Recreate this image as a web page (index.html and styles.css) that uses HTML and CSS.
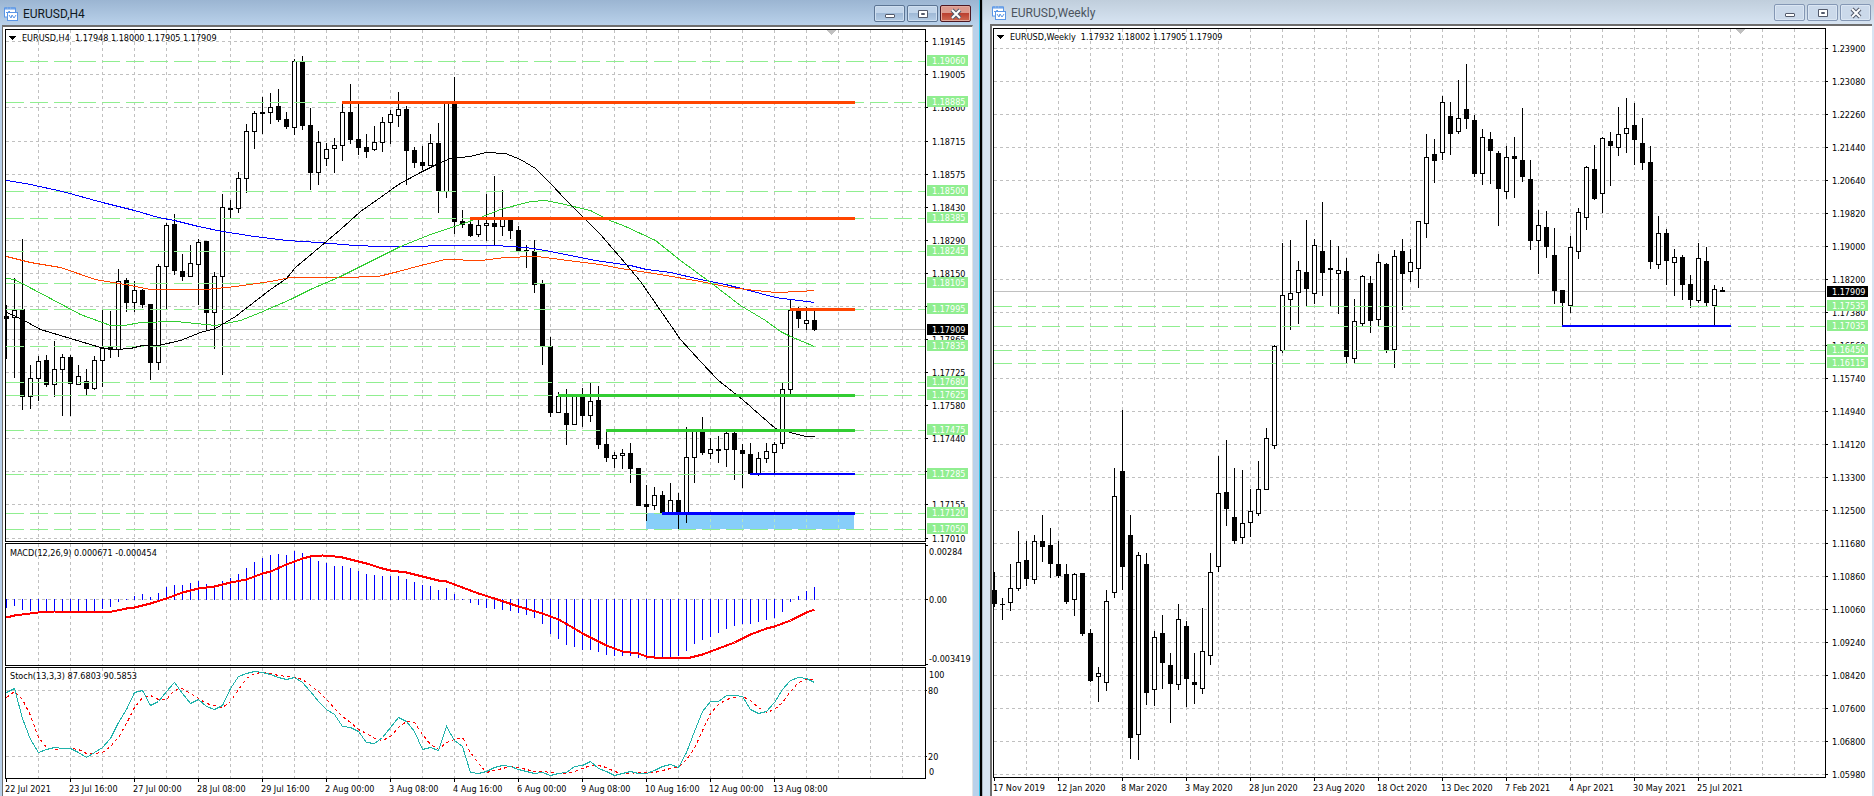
FILE: index.html
```html
<!DOCTYPE html>
<html lang="en">
<head>
    <meta charset="UTF-8">
    <meta name="viewport" content="width=device-width, initial-scale=1.0">
    <title>EURUSD charts</title>
    <link rel="stylesheet" href="styles.css">
</head>
<body>

    <section class="window window-active">
        <header class="titlebar">
            <svg class="app-icon" viewBox="0 0 14 14" aria-hidden="true">
                <rect x="0.5" y="1" width="11" height="9" fill="#fff" stroke="#5a96e6"/>
                <path d="M0 2h12M2 0v2M5 0v2M8 0v2M10 0v2" stroke="#5a96e6"/>
                <path d="M2 6l1-1 1 1 1-2 2 2" fill="none" stroke="#5a96e6"/>
                <rect x="3.5" y="5.5" width="10" height="8" fill="#fff" stroke="#5a96e6"/>
                <path d="M3 5.5h11" stroke="#5a96e6"/>
                <path d="M5 8l2 3 1-3 2 3 2-3" fill="none" stroke="#5a96e6"/>
            </svg>
            <h1 class="title">EURUSD,H4</h1>
            <button class="win-btn" aria-label="Minimize"><svg viewBox="0 0 12 12"><rect x="1.5" y="6.5" width="9" height="3" rx="0.5" fill="#fff" stroke="#535a6b"/></svg></button>
            <button class="win-btn" aria-label="Maximize"><svg viewBox="0 0 12 12"><path d="M1.500 2.500h9v7h-9zM4.500 5.500h3v1h-3z" fill="#fff" stroke="#535a6b"/></svg></button>
            <button class="win-btn win-close" aria-label="Close"><svg viewBox="0 0 12 12"><path d="M2 2l8 8M10 2l-8 8" stroke="#535a6b" stroke-width="4"/><path d="M2 2l8 8M10 2l-8 8" stroke="#fff" stroke-width="2"/></svg></button>
        </header>
        <div class="client">
            <svg class="pane pane-price" id="h4Price"></svg>
            <svg class="pane pane-macd" id="h4Macd"></svg>
            <svg class="pane pane-stoch" id="h4Stoch"></svg>
            <svg class="dates" id="h4Dates"></svg>
        </div>
    </section>

    <section class="window window-weekly">
        <header class="titlebar">
            <svg class="app-icon" viewBox="0 0 14 14" aria-hidden="true">
                <rect x="0.5" y="1" width="11" height="9" fill="#fff" stroke="#5a96e6"/>
                <path d="M0 2h12M2 0v2M5 0v2M8 0v2M10 0v2" stroke="#5a96e6"/>
                <path d="M2 6l1-1 1 1 1-2 2 2" fill="none" stroke="#5a96e6"/>
                <rect x="3.5" y="5.5" width="10" height="8" fill="#fff" stroke="#5a96e6"/>
                <path d="M3 5.5h11" stroke="#5a96e6"/>
                <path d="M5 8l2 3 1-3 2 3 2-3" fill="none" stroke="#5a96e6"/>
            </svg>
            <h1 class="title">EURUSD,Weekly</h1>
            <button class="win-btn" aria-label="Minimize"><svg viewBox="0 0 12 12"><rect x="1.5" y="6.5" width="9" height="3" rx="0.5" fill="#fff" stroke="#535a6b"/></svg></button>
            <button class="win-btn" aria-label="Maximize"><svg viewBox="0 0 12 12"><path d="M1.500 2.500h9v7h-9zM4.500 5.500h3v1h-3z" fill="#fff" stroke="#535a6b"/></svg></button>
            <button class="win-btn" aria-label="Close"><svg viewBox="0 0 12 12"><path d="M2 2l8 8M10 2l-8 8" stroke="#535a6b" stroke-width="4"/><path d="M2 2l8 8M10 2l-8 8" stroke="#fff" stroke-width="2"/></svg></button>
        </header>
        <div class="client">
            <svg class="pane pane-price" id="wPrice"></svg>
            <svg class="dates" id="wDates"></svg>
        </div>
    </section>

    <script src="charts.js"></script>
</body>
</html>
```
FILE: styles.css
```css
* {
    box-sizing: border-box;
}

body {
    margin: 0;
    height: 100vh;
    display: grid;
    grid-template-columns: minmax(0, 980fr) minmax(0, 892fr);
    gap: 2px;
    background-color: #000;
    overflow: hidden;
}

.window {
    display: flex;
    flex-direction: column;
    min-width: 0;
}

.window-active {
    padding: 0 6px 0 2px;
    border-right: 1px solid #35c4e8;
    background: linear-gradient(#9bb5d2, #b9d1ea 25px);
}

.window-weekly {
    padding: 0 2px 0 7px;
    border-left: 1px solid #a9b4bf;
    background: linear-gradient(#c0cedc, #d7e4f2 24px);
}

/* title bar */
.titlebar {
    display: flex;
    align-items: center;
    gap: 2px;
    height: 25px;
    flex: none;
    padding: 2px 2px 0 2px;
}

.window-weekly .titlebar {
    height: 24px;
    padding: 1px 1px 0 2px;
}

.app-icon {
    width: 14px;
    height: 14px;
    flex: none;
}

.title {
    flex: 1;
    margin: 0 0 0 3px;
    font: 12px Roboto, sans-serif;
    line-height: 16px;
    color: #101820;
    white-space: nowrap;
}

.window-weekly .title {
    color: #4c5560;
}

.win-btn {
    width: 31px;
    height: 17px;
    padding: 0;
    display: flex;
    align-items: center;
    justify-content: center;
    border: 1px solid #5c7594;
    border-radius: 2px;
    background: linear-gradient(#c2d5ea 45%, #9fb9d6 50%, #b5cde6);
    box-shadow: inset 0 0 0 1px #cfdff0;
}

.window-weekly .win-btn {
    border-color: #8497b4;
    background: #cbd9ea;
    box-shadow: inset 0 0 0 1px #dbe6f3;
}

.win-btn svg {
    width: 12px;
    height: 12px;
}

.win-close {
    border-color: #4e1822;
    background: linear-gradient(#dc9a8e 45%, #bb4030 50%, #cf6a52);
    box-shadow: inset 0 0 0 1px #e3a99d;
}

/* chart area */
.client {
    flex: 1;
    min-height: 0;
    display: flex;
    flex-direction: column;
    gap: 1px;
    padding: 2px 0 0 2px;
    background-color: #fff;
    border-top: 2px solid #6e6e6e;
    border-left: 1px solid #6e6e6e;
    border-right: 1px solid #e3e3e3;
}

.window-weekly .client {
    padding-left: 1px;
    gap: 0;
    border-left-width: 2px;
    border-right: none;
}

.pane {
    width: 100%;
    min-height: 0;
    display: block;
}

.pane-price {
    flex: 513 1 0;
}

.pane-macd {
    flex: 123 1 0;
}

.pane-stoch {
    flex: 112 1 0;
}

.dates {
    width: 100%;
    height: 17px;
    flex: none;
    margin-top: -1px;
}

.window-weekly .dates {
    height: 18px;
    margin-top: 0;
}

.pane, .dates {
    overflow: visible;
    shape-rendering: crispEdges;
    font: 9px "DejaVu Sans Condensed", "DejaVu Sans", sans-serif;
}

.frame {
    fill: none;
    stroke: #000;
}

.grid {
    fill: none;
    stroke: #c0c0c0;
    stroke-dasharray: 3 3;
}

.grid-zone {
    fill: none;
    stroke: #b0e6c8;
    stroke-dasharray: 3 3;
}

.level {
    fill: none;
    stroke: #90ee90;
    stroke-dasharray: 18 6;
}

.bid {
    stroke: #c0c0c0;
}

.tick {
    stroke: #000;
}

.candle-down {
    fill: #000;
}

.candle-up {
    fill: #fff;
    stroke: #000;
}

.zone {
    fill: #87cefa;
}

.marker {
    fill: #c0c0c0;
}

.tag-level {
    fill: #90ee90;
}

.tag-bid {
    fill: #000;
}

.tag-text {
    fill: #fff;
}

.line {
    fill: none;
}

.black { stroke: #000; }
.blue { stroke: #0000ff; }
.orange { stroke: #ff4500; }
.green { stroke: #32cd32; }
.red { stroke: #ff0000; }
.teal { stroke: #20b2aa; }

.wide {
    stroke-width: 2;
}

.wider {
    stroke-width: 3;
}

.dotted {
    stroke-dasharray: 3 3;
}
```
FILE: charts.js
```js
var AXIS = 46;   // width of the price scale
var STEP = 8;    // distance between bars

// candles: high, body top, body bottom, low, 1 = up / 0 = down
var h4Bars = [
    [305,316,319,359,0],[278,310,318,378,1],[239,309,397,410,0],[365,378,397,409,1],[356,361,379,401,1],
    [355,360,385,387,0],[341,369,385,397,1],[354,357,370,416,1],[355,357,384,416,0],[365,376,385,385,1],
    [369,381,389,395,0],[356,360,389,390,1],[310,348,361,387,1],[311,347,350,358,0],[269,281,350,357,1],
    [278,280,303,312,0],[281,290,303,312,1],[289,290,305,308,0],[304,304,363,380,0],[264,266,363,370,1],
    [223,225,267,309,1],[214,224,271,275,0],[254,271,277,281,0],[245,263,277,277,1],[239,242,265,305,1],
    [241,241,313,330,0],[272,276,313,349,1],[194,207,277,375,1],[200,208,210,218,0],[172,178,209,213,1],
    [124,131,179,193,1],[111,113,132,149,1],[97,112,114,134,0],[93,107,113,124,1],[89,106,120,122,0],
    [112,119,127,129,0],[59,61,128,135,1],[56,61,126,130,0],[108,125,173,190,0],[131,142,173,185,1],
    [143,149,159,166,1],[138,145,149,173,1],[103,112,146,161,1],[84,112,140,144,0],[104,139,148,155,0],
    [134,147,152,158,0],[126,142,150,151,1],[117,122,143,152,1],[110,114,123,144,1],[92,109,116,127,1],
    [106,109,151,185,0],[147,150,163,168,0],[146,162,166,170,0],[134,143,166,166,1],[123,143,191,213,0],
    [102,102,192,198,1],[77,103,222,234,0],[210,221,225,228,0],[219,224,236,237,0],[219,225,235,237,1],
    [194,223,226,241,1],[176,223,227,245,0],[190,219,227,236,1],[219,220,231,239,0],[226,230,251,251,0],
    [245,250,251,268,0],[240,251,285,293,0],[280,284,346,365,0],[337,346,413,417,0],[392,396,413,413,1],
    [389,413,425,445,0],[396,396,425,425,1],[388,396,416,427,0],[383,401,416,422,1],[386,400,445,449,0],
    [430,444,458,462,0],[452,455,459,468,1],[449,453,456,469,1],[443,453,469,483,0],[468,468,506,506,0],
    [485,504,507,521,0],[487,495,506,510,1],[491,495,514,514,0],[483,500,514,514,1],[493,500,514,529,0],
    [427,457,514,523,1],[430,430,458,483,1],[417,430,453,455,0],[438,449,454,459,1],[436,449,451,463,0],
    [432,433,450,467,1],[432,433,450,480,0],[444,450,454,488,0],[443,454,474,474,0],[452,458,474,476,1],
    [443,451,459,463,1],[442,444,453,474,1],[383,389,444,449,1],[300,310,390,395,1],[307,311,319,328,0],
    [307,320,324,330,1],[309,320,330,331,0]
];

var weeklyBars = [
    [572,590,604,607,0],[598,604,605,620,0],[564,588,603,611,1],[531,562,589,591,1],[541,560,579,586,0],
    [535,541,580,584,1],[515,541,547,562,0],[528,545,564,578,0],[541,564,576,578,0],[564,574,602,604,0],
    [573,574,600,616,1],[573,573,634,636,0],[629,633,681,682,0],[667,673,677,702,1],[590,601,683,691,1],
    [468,496,593,598,1],[410,471,567,590,0],[515,535,738,759,0],[552,555,735,760,1],[553,564,693,705,0],
    [631,637,690,706,1],[615,633,663,689,0],[653,665,684,723,0],[604,619,685,690,1],[621,626,679,707,0],
    [653,682,685,704,0],[608,651,689,694,1],[553,572,656,665,1],[456,493,567,572,1],[440,492,509,526,0],
    [468,517,541,544,0],[470,523,538,544,1],[489,511,523,537,1],[461,489,514,516,1],[428,438,490,490,1],
    [345,346,446,449,1],[243,295,351,353,1],[240,293,300,330,1],[261,270,293,324,1],[220,272,289,306,0],
    [239,245,294,304,1],[202,251,273,296,0],[240,268,270,306,0],[246,270,274,314,1],[258,271,357,363,0],
    [299,321,359,363,1],[275,276,324,326,1],[276,283,321,333,0],[254,262,320,326,1],[263,264,350,353,0],
    [250,256,350,368,1],[239,251,274,310,0],[249,262,272,282,1],[221,221,269,288,1],[134,157,224,238,1],
    [139,154,161,183,0],[96,102,153,160,1],[102,116,134,155,0],[80,118,132,134,1],[64,109,119,129,0],
    [115,120,174,177,0],[129,137,174,185,1],[132,139,151,184,0],[151,153,189,226,0],[146,157,192,199,1],
    [137,156,159,198,0],[108,160,177,182,0],[160,179,241,250,0],[210,225,241,274,1],[211,227,247,258,0],
    [228,255,291,304,0],[290,290,303,326,0],[236,247,306,313,1],[208,212,252,259,1],[166,167,218,230,1],
    [145,169,199,200,0],[137,138,194,213,1],[132,141,146,186,0],[107,134,148,156,1],[98,128,134,153,1],
    [103,125,140,165,0],[118,143,163,170,0],[146,162,262,269,0],[216,233,265,269,1],[229,233,261,285,0],
    [249,257,263,296,1],[255,257,285,300,0],[275,284,300,308,0],[243,258,301,303,1],[247,261,303,306,0],
    [285,289,306,325,1],[287,290,292,292,0]
];

// moving averages, x then y
var maSlow = [6,180,30,184,62,191,102,202,134,210,158,217,174,220,198,226,222,231,254,236,286,240,318,242,355,245,380,246,415,246,440,245,495,245,525,247,545,250,575,256,595,260,630,265,646,269,670,272,700,279,725,284,745,289,760,293,775,297,790,299,814,302];
var maOrange = [6,256,30,262,60,267,95,279,130,285,150,289,206,289,235,286,270,281,290,277,310,277,340,277,378,276,398,271,420,265,445,259,480,260,505,257,535,256,545,257,575,261,600,264,620,268,660,274,700,281,730,287,755,290,775,292,800,291,814,290];
var maGreen = [6,278,14,279,50,298,80,314,110,325,124,325,140,322,175,321,215,325,240,320,260,312,290,299,310,289,340,276,370,261,400,246,430,234,460,224,480,217,500,209,530,201,545,200,560,203,590,210,607,219,625,226,655,240,680,260,710,282,740,305,765,320,780,331,790,336,814,346];
var maFast = [6,312,20,318,40,329,70,338,100,347,115,349,130,348,142,345,158,345,180,340,200,332,215,328,235,316,270,289,286,278,295,267,320,246,340,229,360,211,380,197,398,184,420,172,440,162,450,158,470,156,485,152,505,153,520,159,535,168,550,183,565,199,580,214,600,234,625,263,640,281,660,310,680,339,700,361,718,380,742,399,760,415,775,428,790,432,805,436,814,436];

var macdBars = [608,606,610,611,611,611,611,611,611,611,611,611,609,607,602,600,596,594,597,593,587,585,585,583,581,584,586,581,578,574,568,562,558,555,554,555,551,553,556,561,563,566,566,568,571,574,575,576,576,576,579,582,585,586,590,588,594,600,603,605,608,609,610,611,613,615,618,624,634,639,645,647,650,650,652,655,656,656,656,658,659,657,657,657,656,651,644,640,637,633,629,626,624,624,622,620,618,612,602,596,591,587];
var macdSignal = [6,617,14,615,38,612,54,611,80,611,102,612,112,611,126,608,134,607,150,603,166,598,182,592,198,588,214,586,230,582,246,579,262,573,270,571,286,564,302,558,310,556,322,555,334,556,342,557,366,563,382,568,390,570,406,572,422,576,438,580,446,581,462,587,478,593,494,598,518,606,542,613,558,619,574,628,582,633,598,641,606,645,622,651,638,653,646,656,654,657,690,657,702,654,718,648,734,642,750,634,766,628,774,626,790,620,806,612,814,609];

var stochMain = [692,688,718,739,752,749,747,748,748,752,757,752,747,738,722,709,692,690,705,701,691,682,693,703,699,706,709,705,688,676,673,671,672,674,677,679,677,682,691,701,709,714,726,727,731,742,743,737,727,717,721,731,749,747,750,726,740,746,772,773,771,767,765,766,769,771,773,772,775,773,772,766,765,761,768,771,775,773,771,773,773,770,766,764,767,752,731,711,701,701,695,695,696,709,713,711,702,689,680,677,678,682];
var stochSignal = [697,691,699,715,737,747,749,748,748,749,753,753,752,746,737,723,707,697,695,699,699,690,688,693,698,703,705,707,701,689,678,673,672,673,675,676,677,679,685,691,699,708,716,722,729,733,738,740,736,727,721,722,734,744,749,742,739,737,752,763,772,770,768,766,767,769,771,771,772,773,773,771,768,765,765,767,771,773,773,772,772,772,770,768,767,759,748,730,713,704,699,697,696,700,707,712,709,702,691,682,679,679];

var h4Dates = ["22 Jul 2021", "23 Jul 16:00", "27 Jul 00:00", "28 Jul 08:00", "29 Jul 16:00", "2 Aug 00:00", "3 Aug 08:00", "4 Aug 16:00", "6 Aug 00:00", "9 Aug 08:00", "10 Aug 16:00", "12 Aug 00:00", "13 Aug 08:00"];
var weeklyDates = ["17 Nov 2019", "12 Jan 2020", "8 Mar 2020", "3 May 2020", "28 Jun 2020", "23 Aug 2020", "18 Oct 2020", "13 Dec 2020", "7 Feb 2021", "4 Apr 2021", "30 May 2021", "25 Jul 2021"];

// pane with its own vertical range [from, from + span]
function Pane(id, from, span, left) {
    this.el = document.getElementById(id);
    this.w = this.el.clientWidth;
    this.h = this.el.clientHeight;
    this.plot = this.w - AXIS;
    this.from = from;
    this.k = this.h / span;
    this.left = left;
    this.out = [];
}

Pane.prototype.y = function (v) {
    return Math.round((v - this.from) * this.k);
};

Pane.prototype.x = function (i) {
    return 1 + i * STEP;
};

Pane.prototype.rect = function (x, y, w, h, cls) {
    this.out.push('<rect x="' + x + '" y="' + y + '" width="' + w + '" height="' + h + '" class="' + cls + '"/>');
};

Pane.prototype.path = function (d, cls) {
    this.out.push('<path d="' + d + '" class="' + cls + '"/>');
};

Pane.prototype.text = function (x, y, s, cls) {
    this.out.push('<text x="' + x + '" y="' + y + '" xml:space="preserve" class="' + (cls || '') + '">' + s + '</text>');
};

Pane.prototype.hline = function (v, cls) {
    this.path('M1 ' + (this.y(v) + 0.5) + 'H' + (this.plot - 1), cls);
};

Pane.prototype.vgrid = function (fromX, toX, top, bottom, cls) {
    for (var i = 4; this.x(i) < toX; i += 4) {
        if (this.x(i) > fromX) {
            this.path('M' + (this.x(i) + 0.5) + ' ' + top + 'V' + bottom, cls);
        }
    }
};

Pane.prototype.scaleLabel = function (v, s) {
    var y = this.y(v);
    this.path('M' + this.plot + ' ' + (y + 0.5) + 'h2', 'tick');
    this.text(this.plot + 6, y + 4, s);
};

Pane.prototype.tag = function (v, s, cls, shift) {
    var y = this.y(v) + shift;
    this.rect(this.plot + 1, y - 5, 41, 11, cls);
    this.text(this.plot + 6, y + 4, s, 'tag-text');
};

Pane.prototype.candles = function (bars) {
    for (var i = 0; i < bars.length; i++) {
        var b = bars[i], x = this.x(i);
        var top = this.y(b[1]), height = Math.max(this.y(b[2]) - top, 1);
        this.rect(x, this.y(b[0]), 1, this.y(b[3]) - this.y(b[0]), 'candle-down');
        if (b[4]) {
            this.out.push('<rect x="' + (x - 1.5) + '" y="' + (top + 0.5) + '" width="4" height="' + (height - 1) + '" class="candle-up"/>');
        } else {
            this.rect(x - 2, top, 5, height, 'candle-down');
        }
    }
};

// flat list of x,y pairs
Pane.prototype.curve = function (pts, cls) {
    var d = '';
    for (var i = 0; i < pts.length; i += 2) {
        d += (i ? 'L' : 'M') + (pts[i] - this.left + 0.5) + ' ' + (this.y(pts[i + 1]) + 0.5);
    }
    this.path(d, 'line ' + cls);
};

// one value per bar
Pane.prototype.series = function (vals, cls) {
    var d = '';
    for (var i = 0; i < vals.length; i++) {
        d += (i ? 'L' : 'M') + (this.x(i) + 0.5) + ' ' + (this.y(vals[i]) + 0.5);
    }
    this.path(d, 'line ' + cls);
};

Pane.prototype.ray = function (v, fromBar, toBar, cls) {
    var off = cls.indexOf('wider') >= 0 ? 0.5 : 0;
    this.path('M' + this.x(fromBar) + ' ' + (this.y(v) + off) + 'H' + (this.x(toBar) + 1), 'line ' + cls);
};

Pane.prototype.caption = function (s) {
    this.path('M4 7h7l-3 4h-1z', 'candle-down');
    this.text(17, 12, s);
};

Pane.prototype.marker = function (x) {
    this.path('M' + (x - 4) + ' 1h9l-4 5h-1z', 'marker');
};

Pane.prototype.done = function () {
    this.path('M0.5 0.5H' + (this.plot - 0.5) + 'V' + (this.h - 0.5) + 'H0.5z', 'frame');
    this.el.innerHTML = this.out.join('');
};

function drawPrice(p, c) {
    var i, y;
    p.vgrid(0, p.plot, 1, p.h, 'grid');
    for (i = 0; i < c.scale.length; i++) {
        y = c.scaleY ? c.scaleY[i] : c.first + i * 33;
        p.hline(y, 'grid');
        p.scaleLabel(y, c.scale[i]);
    }
    p.hline(c.bid, 'bid');
    if (c.zone) {
        var zx = p.x(c.zone[0]), zr = p.x(c.zone[1]);
        p.rect(zx, p.y(c.zone[2]), zr - zx, p.y(c.zone[3]) - p.y(c.zone[2]), 'zone');
        p.vgrid(zx, zr, p.y(c.zone[2]), p.y(c.zone[3]), 'grid-zone');
    }
    p.candles(c.bars);
    for (i = 0; i < c.levels.length; i++) {
        p.hline(c.levels[i][0], 'level');
    }
    for (i = 0; i < c.curves.length; i++) {
        p.curve(c.curves[i][0], c.curves[i][1]);
    }
    for (i = 0; i < c.rays.length; i++) {
        p.ray(c.rays[i][0], c.rays[i][1], c.rays[i][2], c.rays[i][3]);
    }
    for (i = 0; i < c.levels.length; i++) {
        p.tag(c.levels[i][0], c.levels[i][1], 'tag-level', -1);
    }
    p.tag(c.bid, '1.17909', 'tag-bid', 0);
    p.caption(c.caption);
    p.marker(c.marker);
    p.done();
}

function drawDates(id, labels) {
    var p = new Pane(id, 0, 17, 0);
    for (var i = 0; i < labels.length; i++) {
        p.path('M' + (p.x(i * 8) + 0.5) + ' 0v3', 'tick');
        p.text(p.x(i * 8) - 1, 13, labels[i]);
    }
    p.el.innerHTML = p.out.join('');
}

function drawAll() {
    drawPrice(new Pane('h4Price', 29, 513, 5), {
        caption: 'EURUSD,H4  1.17948 1.18000 1.17905 1.17909',
        scale: ['1.19145', '1.19005', '1.18860', '1.18715', '1.18575', '1.18430', '1.18290', '1.18150', '1.18010', '1.17865', '1.17725', '1.17580', '1.17440', '1.17300', '1.17155', '1.17010'],
        scaleY: [41, 74, 107, 141, 174, 207, 240, 273, 306, 339, 372, 405, 438, 471, 504, 538],
        bid: 329,
        levels: [[61, '1.19060'], [102, '1.18885'], [191, '1.18500'], [218, '1.18385'], [251, '1.18245'], [283, '1.18105'], [309, '1.17995'], [346, '1.17835'], [382, '1.17680'], [395, '1.17625'], [430, '1.17475'], [474, '1.17285'], [513, '1.17120'], [529, '1.17050']],
        zone: [80, 106, 513, 529],
        bars: h4Bars,
        curves: [[maSlow, 'blue'], [maOrange, 'orange'], [maGreen, 'green'], [maFast, 'black']],
        rays: [[102, 42, 106, 'orange wider'], [218, 58, 106, 'orange wider'], [309, 98, 106, 'orange wider'], [395, 69, 106, 'green wider'], [430, 75, 106, 'green wider'], [474, 93, 106, 'blue wide'], [513, 82, 106, 'blue wider']],
        marker: 826
    });

    // MACD
    var m = new Pane('h4Macd', 543, 123, 5);
    m.vgrid(0, m.plot, 1, m.h, 'grid');
    m.hline(599, 'grid');
    for (var i = 0; i < macdBars.length; i++) {
        var a = m.y(Math.min(599, macdBars[i])), b = m.y(Math.max(600, macdBars[i]));
        m.path('M' + (m.x(i) + 0.5) + ' ' + a + 'V' + b, 'blue');
    }
    m.curve(macdSignal, 'red wide');
    m.path('M' + m.plot + ' 2.5h2M' + m.plot + ' ' + (m.y(599) + 0.5) + 'h2M' + m.plot + ' ' + (m.h - 1.5) + 'h2', 'tick');
    m.text(m.plot + 3, m.y(555), '0.00284');
    m.text(m.plot + 3, m.y(603), '0.00');
    m.text(m.plot + 3, m.y(662), '-0.003419');
    m.text(5, 13, 'MACD(12,26,9) 0.000671 -0.000454');
    m.done();

    // stochastic
    var s = new Pane('h4Stoch', 667, 112, 5);
    s.vgrid(0, s.plot, 1, s.h, 'grid');
    s.hline(690, 'grid');
    s.hline(756, 'grid');
    s.series(stochSignal, 'red dotted');
    s.series(stochMain, 'teal');
    s.path('M' + s.plot + ' ' + (s.y(690) + 0.5) + 'h1M' + s.plot + ' ' + (s.y(756) + 0.5) + 'h1', 'tick');
    s.text(s.plot + 3, s.y(678), '100');
    s.text(s.plot + 2, s.y(694), '80');
    s.text(s.plot + 2, s.y(760), '20');
    s.text(s.plot + 3, s.y(775), '0');
    s.text(5, 12, 'Stoch(13,3,3) 87.6803 90.5853');
    s.done();
    drawDates('h4Dates', h4Dates);

    drawPrice(new Pane('wPrice', 28, 750, 993), {
        caption: 'EURUSD,Weekly  1.17932 1.18002 1.17905 1.17909',
        scale: ['1.23900', '1.23080', '1.22260', '1.21440', '1.20640', '1.19820', '1.19000', '1.18200', '1.17380', '1.16560', '1.15740', '1.14940', '1.14120', '1.13300', '1.12500', '1.11680', '1.10860', '1.10060', '1.09240', '1.08420', '1.07600', '1.06800', '1.05980'],
        first: 48,
        bid: 291,
        levels: [[306, '1.17535'], [326, '1.17035'], [350, '1.16450'], [363, '1.16115']],
        bars: weeklyBars,
        curves: [],
        rays: [[326, 71, 92, 'blue wide']],
        marker: 747
    });
    drawDates('wDates', weeklyDates);
}

drawAll();
window.addEventListener('resize', drawAll);
```
